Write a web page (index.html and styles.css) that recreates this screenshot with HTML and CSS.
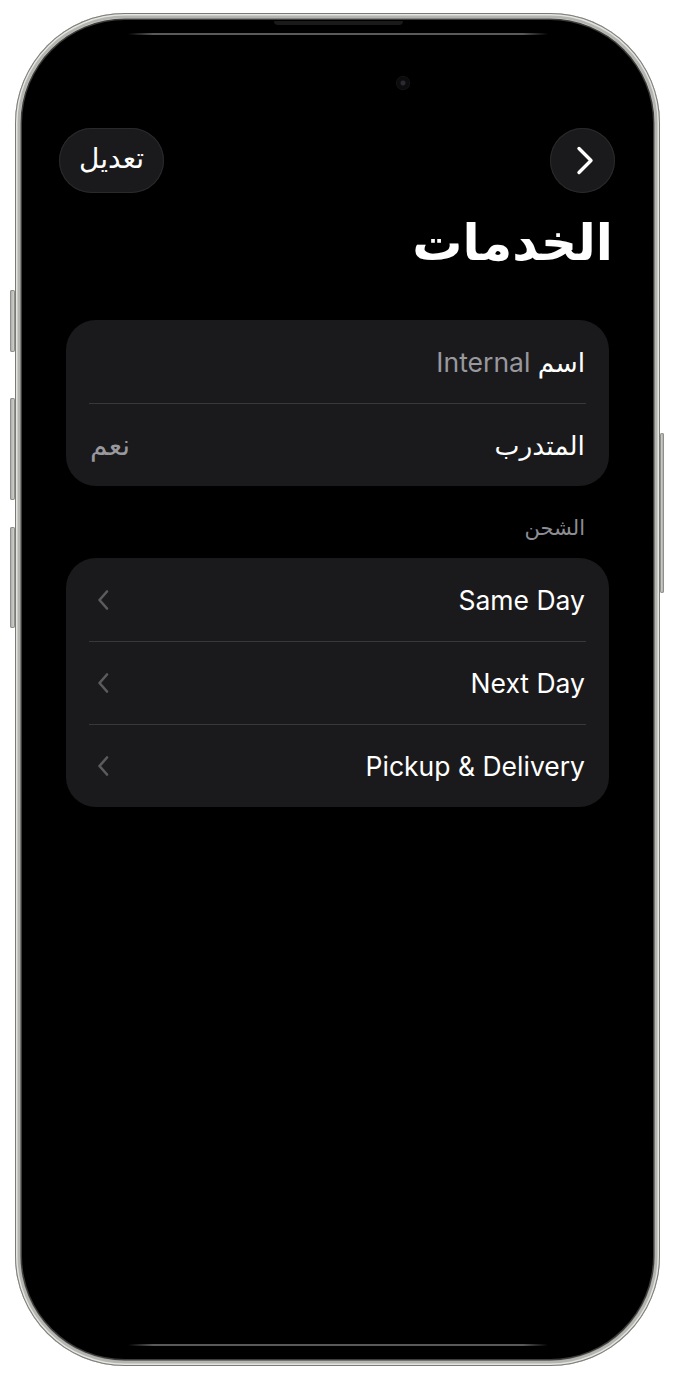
FILE: index.html
```html
<!DOCTYPE html>
<html lang="ar" dir="rtl">
<head>
<meta charset="utf-8">
<title>الخدمات</title>
<link rel="stylesheet" href="styles.css">
</head>
<body>
<div class="stage">
  <div class="phone">
    <span class="side-btn side-l1"></span>
    <span class="side-btn side-l2"></span>
    <span class="side-btn side-l3"></span>
    <span class="side-btn side-r1"></span>
    <span class="speaker"></span>
    <div class="screen">
      <span class="glass-line glass-top"></span>
      <span class="glass-line glass-bottom"></span>
      <span class="camera"></span>

      <nav class="nav">
        <button class="circle-btn" aria-label="رجوع">
          <svg class="back-chev" viewBox="0 0 20 31" width="20" height="31" aria-hidden="true">
            <path d="M4 3.5 L16 15.5 L4 27.5" fill="none" stroke="#fff" stroke-width="3.4" stroke-linecap="round" stroke-linejoin="round"/>
          </svg>
        </button>
        <button class="pill-btn">تعديل</button>
      </nav>

      <h1 class="title">الخدمات</h1>

      <section class="card">
        <div class="row"><span class="label">اسم <span class="muted">Internal</span></span></div>
        <div class="row"><span class="label">المتدرب</span><span class="value">نعم</span></div>
      </section>

      <h2 class="section-head">الشحن</h2>

      <section class="card">
        <div class="row">
          <span class="label" dir="ltr">Same Day</span>
          <svg class="chev" viewBox="0 0 14 22" width="14" height="22" aria-hidden="true"><path d="M11 2.5 L3.5 11 L11 19.5" fill="none" stroke="#5b5b5f" stroke-width="2.6" stroke-linecap="round" stroke-linejoin="round"/></svg>
        </div>
        <div class="row">
          <span class="label" dir="ltr">Next Day</span>
          <svg class="chev" viewBox="0 0 14 22" width="14" height="22" aria-hidden="true"><path d="M11 2.5 L3.5 11 L11 19.5" fill="none" stroke="#5b5b5f" stroke-width="2.6" stroke-linecap="round" stroke-linejoin="round"/></svg>
        </div>
        <div class="row">
          <span class="label" dir="ltr">Pickup &amp; Delivery</span>
          <svg class="chev" viewBox="0 0 14 22" width="14" height="22" aria-hidden="true"><path d="M11 2.5 L3.5 11 L11 19.5" fill="none" stroke="#5b5b5f" stroke-width="2.6" stroke-linecap="round" stroke-linejoin="round"/></svg>
        </div>
      </section>
    </div>
  </div>
</div>
</body>
</html>
```

FILE: styles.css
```css
* { box-sizing: border-box; }

html, body {
  margin: 0;
  padding: 0;
  background: #ffffff;
}

body {
  font-family: "Inter", "DejaVu Sans", sans-serif;
  color: #ffffff;
}

.stage {
  padding: 13px 15px 0 0;
  width: 675px;
  height: 1380px;
  direction: ltr;
}

.phone {
  position: relative;
  width: 645px;
  height: 1353px;
  margin-left: 15px;
  padding: 7px;
  border-radius: 110px;
  background: linear-gradient(180deg, #cfcfcc 0%, #b9b9b6 50%, #a3a3a0 100%);
  box-shadow: inset 0 0 0 1px #7a7a77, inset 0 0 0 2.5px #e4e4e1, inset 0 0 0 5px #b4b4b1;
  direction: rtl;
}

.side-btn {
  position: absolute;
  width: 5px;
  border-radius: 2px;
  background: linear-gradient(90deg, #a3a3a0, #dcdcd9);
  box-shadow: inset 0 0 0 1px #8e8e8b;
}
.side-l1 { left: -5px; top: 277px; height: 62px; }
.side-l2 { left: -5px; top: 385px; height: 102px; }
.side-l3 { left: -5px; top: 514px; height: 101px; }
.side-r1 { right: -4px; top: 420px; height: 160px; width: 4px; background: linear-gradient(90deg, #dcdcd9, #a3a3a0); }

.speaker {
  position: absolute;
  top: 8px;
  left: 259px;
  width: 129px;
  height: 4px;
  border-radius: 0 0 4px 4px;
  background: #1a1a1a;
  z-index: 2;
}

.screen {
  position: relative;
  height: 100%;
  border-radius: 103px;
  background: #000000;
  box-shadow: 0 0 0 1.5px #3e3e3c;
  padding: 108px 37px 0 37px;
  overflow: hidden;
}

.glass-line {
  position: absolute;
  left: 106px;
  width: 420px;
  height: 2px;
  background: linear-gradient(90deg, rgba(90,90,90,0), #5a5a5a 6%, #5a5a5a 94%, rgba(90,90,90,0));
}
.glass-top { top: 13px; }
.glass-bottom { bottom: 13px; }

.camera {
  position: absolute;
  top: 57px;
  left: 375px;
  width: 12px;
  height: 12px;
  border-radius: 50%;
  background: radial-gradient(circle, #2a2a30 0 2px, #0c0c0e 3px);
  box-shadow: 0 0 0 1px #161618;
}

.nav {
  display: flex;
  justify-content: space-between;
  align-items: center;
  height: 65px;
}

.circle-btn,
.pill-btn {
  border: none;
  margin: 0;
  padding: 0;
  color: #ffffff;
  background: #1a1a1c;
  box-shadow: inset 0 0 0 1px #2a2a2c;
  display: flex;
  align-items: center;
  justify-content: center;
}

.circle-btn {
  width: 65px;
  height: 65px;
  border-radius: 50%;
  margin-right: 1px;
}

.back-chev {
  margin-left: 4px;
}

.pill-btn {
  width: 105px;
  height: 65px;
  border-radius: 33px;
  font-family: "Inter", "DejaVu Sans", sans-serif;
  font-size: 28px;
  padding-bottom: 5px;
}

.title {
  margin: 14px 3px 0 0;
  height: 94px;
  font-size: 50px;
  line-height: 70px;
  font-weight: 700;
  letter-spacing: 0;
}

.card {
  margin: 19px 7px 0 7px;
  background: #1a1a1c;
  border-radius: 30px;
}

.row {
  margin: 0 23px;
  height: 83px;
  padding: 0 1px;
  display: flex;
  align-items: center;
  justify-content: space-between;
  font-size: 26.5px;
  line-height: 32px;
}

.row + .row {
  border-top: 1px solid #38383a;
}

.label {
  color: #ffffff;
}

.muted,
.value {
  color: #98989e;
}

.value {
  margin-left: 0;
  font-size: 28px;
}

.chev {
  margin-left: 6px;
  flex: none;
}

.section-head {
  margin: 26px 31px 0 0;
  height: 46px;
  font-size: 21px;
  line-height: 32px;
  font-weight: 400;
  color: #8d8d93;
}

.section-head + .card {
  margin-top: 0;
}
```
